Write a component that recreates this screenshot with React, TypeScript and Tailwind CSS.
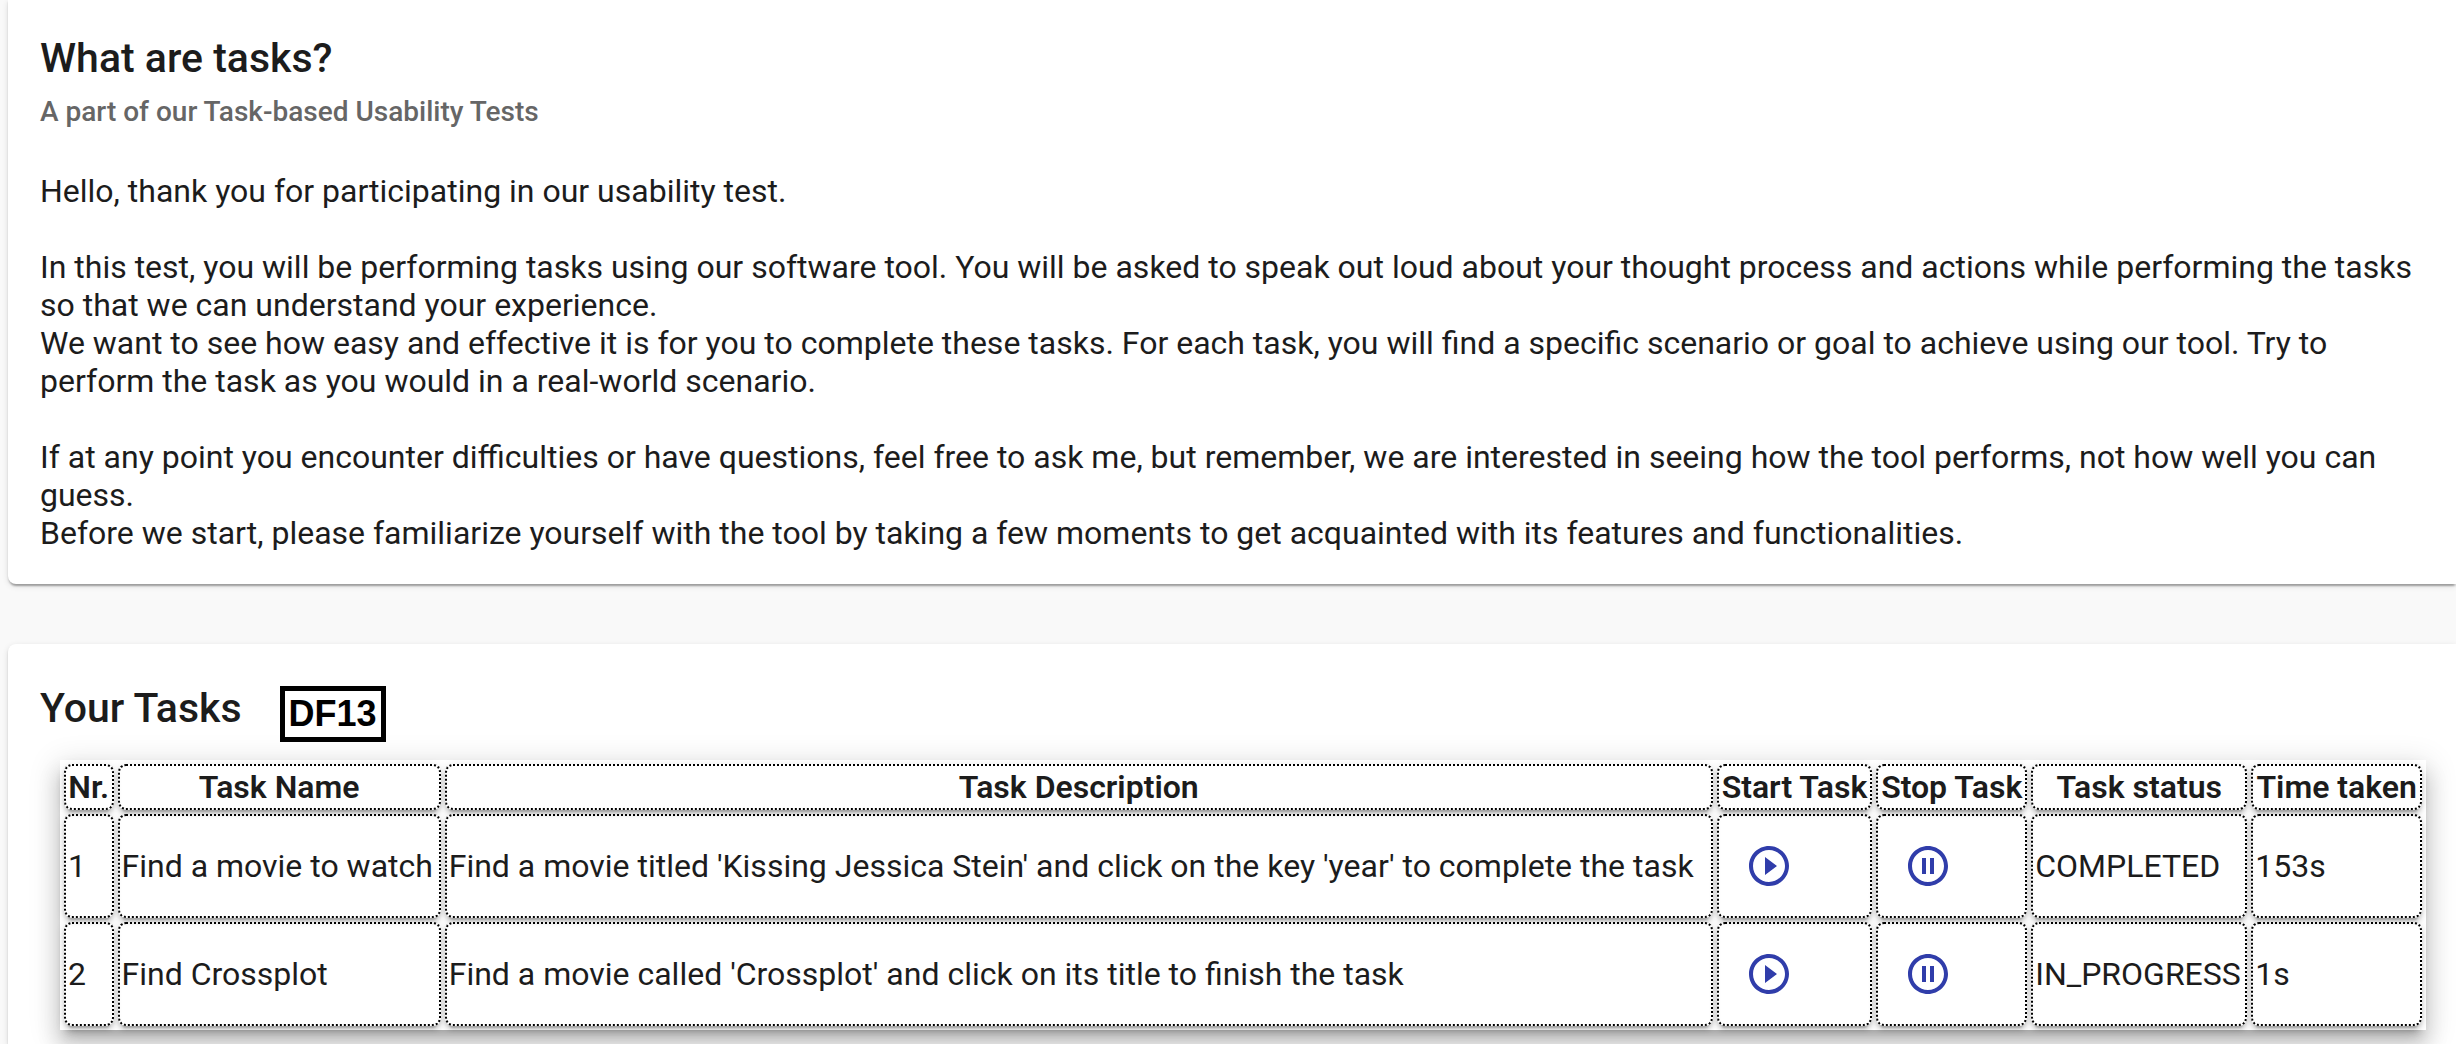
import React from 'react';

type Task = {
  nr: number;
  name: string;
  description: string;
  status: string;
  time: string;
};

const tasks: Task[] = [
  {
    nr: 1,
    name: 'Find a movie to watch',
    description: "Find a movie titled 'Kissing Jessica Stein' and click on the key 'year' to complete the task",
    status: 'COMPLETED',
    time: '153s',
  },
  {
    nr: 2,
    name: 'Find Crossplot',
    description: "Find a movie called 'Crossplot' and click on its title to finish the task",
    status: 'IN_PROGRESS',
    time: '1s',
  },
];

const headings = ['Nr.', 'Task Name', 'Task Description', 'Start Task', 'Stop Task', 'Task status', 'Time taken'];

const cardShadow =
  'shadow-[0_4px_2px_-2px_rgba(0,0,0,0.2),0_2px_2px_0_rgba(0,0,0,0.14),0_2px_6px_0_rgba(0,0,0,0.12)]';

const cell =
  'rounded-lg border-2 border-dotted border-black p-0.5 shadow-[0_6px_2px_-4px_rgba(0,0,0,0.2),0_4px_4px_0_rgba(0,0,0,0.14),0_2px_10px_0_rgba(0,0,0,0.12)]';

function PlayIcon() {
  return (
    <svg viewBox="0 0 24 24" className="size-12" fill="currentColor" aria-hidden="true">
      <path d="M12 2C6.48 2 2 6.48 2 12s4.48 10 10 10 10-4.48 10-10S17.52 2 12 2zm0 18c-4.41 0-8-3.59-8-8s3.59-8 8-8 8 3.59 8 8-3.59 8-8 8zm-2-3.500l6-4.500-6-4.500z" />
    </svg>
  );
}

function PauseIcon() {
  return (
    <svg viewBox="0 0 24 24" className="size-12" fill="currentColor" aria-hidden="true">
      <path d="M9 16h2V8H9v8zm3-14C6.480 2 2 6.480 2 12s4.480 10 10 10 10-4.480 10-10S17.520 2 12 2zm0 18c-4.410 0-8-3.590-8-8s3.590-8 8-8 8 3.590 8 8-3.590 8-8 8zm1-4h2V8h-2v8z" />
    </svg>
  );
}

function IconButton({ label, children }: { label: string; children: React.ReactNode }) {
  return (
    <button type="button" aria-label={label} className="block cursor-pointer rounded-full p-6 text-[#303daa]">
      {children}
    </button>
  );
}

export default function App() {
  return (
    <div className="flex min-h-screen flex-col gap-[60px] bg-[#f9f9f9] pl-2 font-[Roboto,sans-serif] text-[32px] leading-[38px] text-[#1c1c1c]">
      <section className={`rounded-bl-lg bg-white px-8 pt-[26px] pb-8 ${cardShadow}`}>
        <h1 className="text-[41px] leading-[64px] font-medium">What are tasks?</h1>
        <h2 className="mb-[38px] text-[28px] leading-[44px] font-medium text-[#666666]">
          A part of our Task-based Usability Tests
        </h2>
        <div className="flex flex-col gap-[38px]">
          <p>Hello, thank you for participating in our usability test.</p>
          <p>
            In this test, you will be performing tasks using our software tool. You will be asked to speak out loud
            about your thought process and actions while performing the tasks so that we can understand your
            experience.
            <br />
            We want to see how easy and effective it is for you to complete these tasks. For each task, you will find a
            specific scenario or goal to achieve using our tool. Try to perform the task as you would in a real-world
            scenario.
          </p>
          <p>
            If at any point you encounter difficulties or have questions, feel free to ask me, but remember, we are
            interested in seeing how the tool performs, not how well you can guess.
            <br />
            Before we start, please familiarize yourself with the tool by taking a few moments to get acquainted with
            its features and functionalities.
          </p>
        </div>
      </section>

      <section className={`flex-1 rounded-tl-lg bg-white pt-8 pr-[30px] pl-8 ${cardShadow}`}>
        <div className="flex items-start gap-[38px]">
          <h2 className="text-[41px] leading-[64px] font-medium">Your Tasks</h2>
          <span className="mt-2.5 border-[5px] border-black bg-white px-1 font-['Liberation_Sans',sans-serif] text-[36px] leading-[46px] font-bold text-black">
            DF13
          </span>
        </div>
        <div className="pt-[18px] pl-5">
          <table className="w-full border-separate border-spacing-1 bg-white shadow-[0_10px_10px_-6px_rgba(0,0,0,0.2),0_16px_20px_2px_rgba(0,0,0,0.14),0_6px_28px_4px_rgba(0,0,0,0.12)]">
            <thead>
              <tr>
                {headings.map((heading) => (
                  <th key={heading} scope="col" className={`${cell} font-semibold whitespace-nowrap`}>
                    {heading}
                  </th>
                ))}
              </tr>
            </thead>
            <tbody>
              {tasks.map((task) => (
                <tr key={task.nr}>
                  <td className={cell}>{task.nr}</td>
                  <td className={cell}>{task.name}</td>
                  <td className={cell}>{task.description}</td>
                  <td className={cell}>
                    <IconButton label={`Start task ${task.nr}`}>
                      <PlayIcon />
                    </IconButton>
                  </td>
                  <td className={cell}>
                    <IconButton label={`Stop task ${task.nr}`}>
                      <PauseIcon />
                    </IconButton>
                  </td>
                  <td className={cell}>{task.status}</td>
                  <td className={cell}>{task.time}</td>
                </tr>
              ))}
            </tbody>
          </table>
        </div>
      </section>
    </div>
  );
}
